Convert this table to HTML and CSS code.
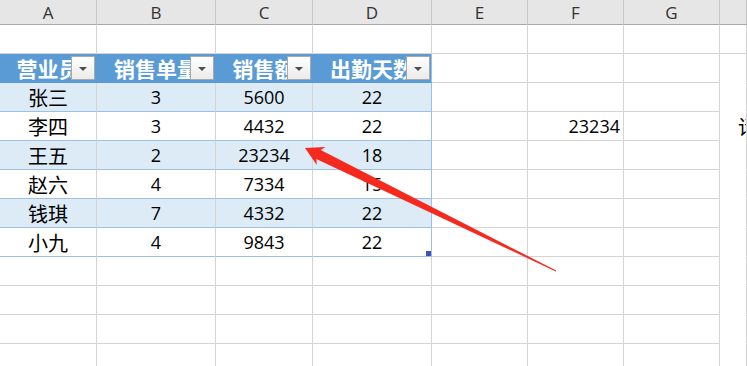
FILE: index.html
```html
<!DOCTYPE html>
<html lang="zh">
<head>
    <meta charset="UTF-8">
    <title>销售统计</title>
    <link rel="stylesheet" href="styles.css">
</head>
<body>

<div class="sheet">
    <div class="row heads">
        <div class="c">A</div><div class="c">B</div><div class="c">C</div><div class="c">D</div>
        <div class="c">E</div><div class="c">F</div><div class="c">G</div><div class="c"></div>
    </div>
    <div class="row">
        <div class="c"></div><div class="c"></div><div class="c"></div><div class="c"></div>
        <div class="c"></div><div class="c"></div><div class="c"></div><div class="c"></div>
    </div>
    <div class="row thead">
        <div class="c t">营业员<span class="filter"></span></div>
        <div class="c t">销售单量<span class="filter"></span></div>
        <div class="c t">销售额<span class="filter"></span></div>
        <div class="c t end">出勤天数<span class="filter"></span></div>
        <div class="c"></div><div class="c"></div><div class="c"></div><div class="c free"></div>
    </div>
    <div class="row tr band">
        <div class="c t name">张三</div><div class="c t">3</div><div class="c t">5600</div><div class="c t end">22</div>
        <div class="c"></div><div class="c"></div><div class="c"></div><div class="c free"></div>
    </div>
    <div class="row tr">
        <div class="c t name">李四</div><div class="c t">3</div><div class="c t">4432</div><div class="c t end">22</div>
        <div class="c"></div><div class="c num">23234</div><div class="c"></div><div class="c free note">请输入</div>
    </div>
    <div class="row tr band">
        <div class="c t name">王五</div><div class="c t">2</div><div class="c t">23234</div><div class="c t end">18</div>
        <div class="c"></div><div class="c"></div><div class="c"></div><div class="c free"></div>
    </div>
    <div class="row tr">
        <div class="c t name">赵六</div><div class="c t">4</div><div class="c t">7334</div><div class="c t end">15</div>
        <div class="c"></div><div class="c"></div><div class="c"></div><div class="c free"></div>
    </div>
    <div class="row tr band">
        <div class="c t name">钱琪</div><div class="c t">7</div><div class="c t">4332</div><div class="c t end">22</div>
        <div class="c"></div><div class="c"></div><div class="c"></div><div class="c free"></div>
    </div>
    <div class="row tr">
        <div class="c t name">小九</div><div class="c t">4</div><div class="c t">9843</div><div class="c t end">22<span class="grip"></span></div>
        <div class="c"></div><div class="c"></div><div class="c"></div><div class="c free"></div>
    </div>
    <div class="row">
        <div class="c"></div><div class="c"></div><div class="c"></div><div class="c"></div>
        <div class="c"></div><div class="c"></div><div class="c"></div><div class="c free"></div>
    </div>
    <div class="row">
        <div class="c"></div><div class="c"></div><div class="c"></div><div class="c"></div>
        <div class="c"></div><div class="c"></div><div class="c"></div><div class="c free"></div>
    </div>
    <div class="row">
        <div class="c"></div><div class="c"></div><div class="c"></div><div class="c"></div>
        <div class="c"></div><div class="c"></div><div class="c"></div><div class="c free"></div>
    </div>
    <div class="row">
        <div class="c"></div><div class="c"></div><div class="c"></div><div class="c"></div>
        <div class="c"></div><div class="c"></div><div class="c"></div><div class="c free"></div>
    </div>

    <!-- annotation arrow drawn over the grid -->
    <svg class="arrow" width="747" height="366" viewBox="0 0 747 366">
        <polygon fill="#f52a1f" points="305,148 325.6,146.9 320.7,150.1 556.2,270.6 555.8,271.4 316.3,159.1 316.8,164.9"/>
    </svg>
</div>

</body>
</html>
```

FILE: styles.css
```css
body { margin: 0; background: #fff; overflow: hidden; font-family: "Open Sans", "Noto Sans CJK SC", sans-serif; color: #000; }
.sheet { position: relative; width: 747px; height: 366px; overflow: hidden; }
.row { display: grid; grid-template-columns: 97px 119px 97px 119px 96px 96px 96px 1fr; height: 29px; }
.c { position: relative; box-sizing: border-box; display: flex; align-items: center; justify-content: center; overflow: hidden; white-space: nowrap; border-right: 1px solid #d4d4d4; border-bottom: 1px solid #d4d4d4; font-size: 18px; }

/* column letters */
.heads { height: 25px; background: #e6e6e6; }
.heads .c { font-size: 17px; color: #333; border-right-color: #c6c6c6; border-bottom-color: #a8a8a8; }

/* table header with filter buttons */
.thead .t { background: #5b9bd5; color: #fff; font-weight: bold; font-size: 21px; border-right-color: #5b9bd5; border-bottom-color: #5b9bd5; }
.thead .t.end { border-right-color: #9bc2e6; }
.filter { position: absolute; right: 1px; top: 2px; width: 24px; height: 24px; box-sizing: border-box; background: linear-gradient(#ffffff, #ebebeb); border: 1px solid #a9a9a9; }
.filter::after { content: ""; position: absolute; left: 7px; top: 10px; border-top: 4px solid #4d4d4d; border-left: 4px solid transparent; border-right: 4px solid transparent; }

/* table body */
.tr .t { border-bottom-color: #9bc2e6; }
.tr .t.end { border-right-color: #9bc2e6; }
.band .t { background: #ddebf7; }
.name { font-size: 20px; }
.grip { position: absolute; right: -1px; bottom: -1px; width: 6px; height: 6px; background: #3f51b5; }

.num { justify-content: flex-end; padding-right: 3px; }
.free { border-bottom-color: transparent; }
.note { justify-content: flex-start; padding-left: 18px; font-size: 20px; }

.arrow { position: absolute; left: 0; top: 0; pointer-events: none; }
```
